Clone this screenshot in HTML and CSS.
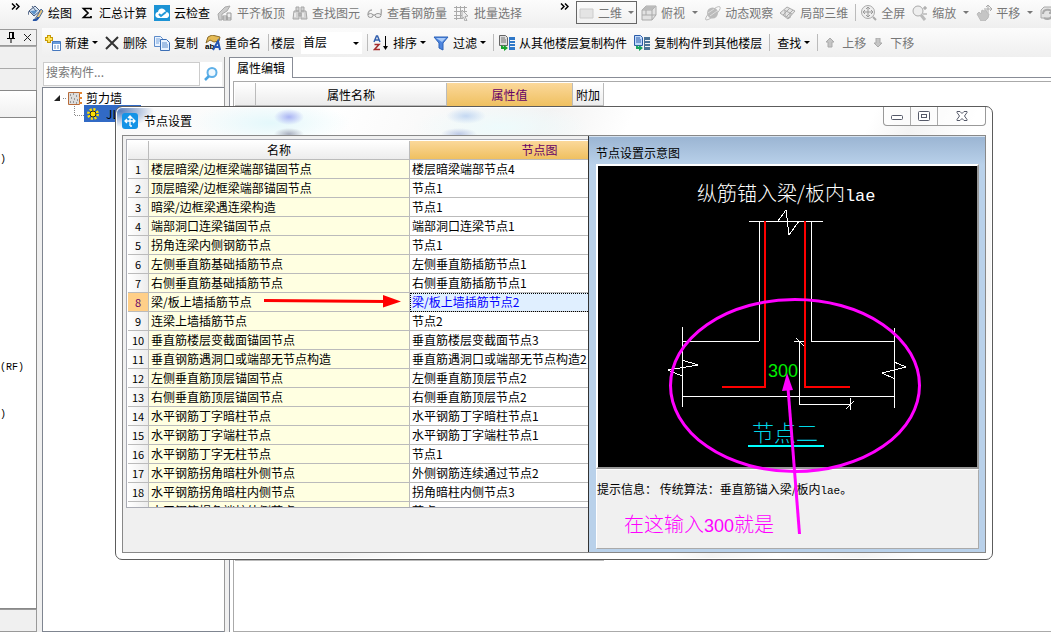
FILE: index.html
```html
<!DOCTYPE html>
<html lang="zh-CN">
<head>
<meta charset="utf-8">
<title>节点设置</title>
<link rel="stylesheet" href="styles.css">
</head>
<body>
<div class="app">
  <nav class="toolbar view-bar" aria-label="视图工具">
    <button class="more" aria-label="更多"><svg width="9" height="7"><path d="M1 .5l3 3-3 3M5 .5l3 3-3 3" fill="none" stroke="#000" stroke-width="1.5"/></svg></button>
    <button class="tool"><svg class="icon" viewBox="0 0 16 16"><path d="M1 6L7 1l5 5-6 5z" fill="#dbe8f5" stroke="#45597b"/><path d="M2 6l8-1-4 5z" fill="#5c91c8"/><path d="M4 1l4 5M1 6L0 10" stroke="#4c6184" fill="none"/><path d="M13 4l-4 7-3 4 5-2 4-7z" fill="#e7c47a" stroke="#4a6b9c"/><path d="M5 15c3 1 5-1 5-3" stroke="#2453a5" stroke-width="2" fill="none"/></svg>绘图</button>
    <button class="tool"><svg class="icon" viewBox="0 0 16 16"><path d="M12 5V3.500H4.500L9 8l-4.500 4.500H12V11" fill="none" stroke="#000" stroke-width="1.700"/></svg>汇总计算</button>
    <button class="tool"><svg class="icon" viewBox="0 0 16 16"><path d="M0 0h16v16H0z" fill="#1c93d5"/><path d="M4 13c-4-1-3-6 0-6 1-5 7-4 8 0 4 0 4 5 1 6z" fill="#fff"/><path d="M5 9l2 2 5-4" fill="none" stroke="#2399d9" stroke-width="2"/></svg>云检查</button>
    <button class="tool off"><svg class="icon" viewBox="0 0 16 16"><path d="M1 9l7-7 5-1-3 5-5 3v6H2z" fill="#ccc" stroke="#aaa"/><path d="M6 11h4v4H6zM10 8h4v7h-4zM6 13h8" fill="#eee" stroke="#999"/></svg>平齐板顶</button>
    <button class="tool off"><svg class="icon" viewBox="0 0 16 16"><path d="M4 2h3v4H4zM9 2h3v4H9zM2 6h5v8H1zM9 6h5l1 8H9zM7 8h2v3H7z" fill="#d2d2d2" stroke="#a6a6a6"/><path d="M3 8v4M11 8v4" stroke="#fff"/></svg>查找图元</button>
    <button class="tool off"><svg class="icon" viewBox="0 0 16 16"><path d="M5 5C2 5 1 8 1 10M14 4c1 2 0 4 0 6M6 10h2" fill="none" stroke="#aaa" stroke-width="1.500"/><ellipse cx="3.500" cy="10.500" rx="2.500" ry="2" fill="#eee" stroke="#999"/><ellipse cx="11" cy="10.500" rx="3" ry="2" fill="#eee" stroke="#999"/></svg>查看钢筋量</button>
    <button class="tool off"><svg class="icon" viewBox="0 0 16 16"><path d="M0 2.500h13M0 6.500h13M0 10.500h8M2.500 1v14M6.500 1v13M10.500 1v5M0 13.500h8" stroke="#aaa" fill="none"/><path d="M8 5l6 6-3 .5 2 4-2 .5-1.500-4L8 14z" fill="#eee" stroke="#aaa"/></svg>批量选择</button>
    <button class="more second" aria-label="更多"><svg width="9" height="7"><path d="M1 .5l3 3-3 3M5 .5l3 3-3 3" fill="none" stroke="#000" stroke-width="1.500"/></svg></button>
    <button class="tool off framed"><svg class="icon" viewBox="0 0 16 16"><path d="M1 4h13v9H1z" fill="#e4e4e4" stroke="#ccc"/></svg>二维<i class="caret"></i></button>
    <button class="tool off"><svg class="icon" viewBox="0 0 16 16"><path d="M1 5l4-4h10v9l-4 5H1z" fill="#e2e2e2" stroke="#aaa"/><path d="M1 5h10v10M11 5l4-4M5 1v9H1M5 10h10" fill="none" stroke="#aaa"/><path d="M1 5l4-4h10l-4 4z" fill="#bbb"/></svg>俯视<i class="caret"></i></button>
    <button class="tool off"><svg class="icon" viewBox="0 0 16 16"><circle cx="7.500" cy="8" r="5.500" fill="#bbb"/><path d="M1 15c-3-3 12-16 14-13s-9 13-14 13" fill="none" stroke="#bbb"/><path d="M3 8l6-4M5 11l7-5" stroke="#ddd"/></svg>动态观察</button>
    <button class="tool off"><svg class="icon" viewBox="0 0 16 16"><path d="M0 8l7-6 8 4-7 8z" fill="#e4e4e4" stroke="#aaa"/><path d="M4 5l8 4M3 10l7-7M6 12l7-7M5 6v5l5 2V8" stroke="#aaa" fill="none"/></svg>局部三维</button>
    <span class="sep tight"></span>
    <button class="tool off"><svg class="icon" viewBox="0 0 16 16"><circle cx="7" cy="7" r="6.500" fill="#eee" stroke="#aaa"/><path d="M7 2v10M2 7h10M5 4l2-2 2 2M5 10l2 2 2-2M4 5L2 7l2 2M10 5l2 2-2 2" fill="none" stroke="#999"/><path d="M12 12l3 3" stroke="#aaa" stroke-width="2"/></svg>全屏</button>
    <button class="tool off"><svg class="icon" viewBox="0 0 16 16"><circle cx="6" cy="6" r="5" fill="#eee" stroke="#aaa"/><path d="M9 10l4 5" stroke="#bbb" stroke-width="3"/><path d="M11 3h4M13 1v4M11 9h4" stroke="#999"/></svg>缩放<i class="caret"></i></button>
    <button class="tool off"><svg class="icon" viewBox="0 0 16 16"><path d="M1 9l2-2 2 2 1-4 2 1 2-1 1 3 2 1-1 4-3 3H5z" fill="#c5c5c5" stroke="#bbb"/><path d="M12 0v8M8 4h8M10 2l2-2 2 2M14 2l2 2-2 2" fill="none" stroke="#aaa"/></svg>平移<i class="caret"></i></button>
    <button class="tool off" aria-label="旋转"><svg class="icon" viewBox="0 0 16 16"><path d="M1 5l3-3h9l2 3v8H1z" fill="#e2e2e2" stroke="#aaa"/><path d="M3 9c0-5 8-6 9-1M13 4v4H9M4 13c3 2 7 1 8-2" fill="none" stroke="#aaa" stroke-width="2"/></svg></button>
  </nav>

  <div class="main">
    <aside class="dock">
      <header class="dock-head">
        <button aria-label="固定"><svg width="8" height="11"><path d="M2.500 0v6M5.500 0v6M6.500 0v6M2 .5h5M0 6.500h8M4 7v4" stroke="#000" fill="none"/></svg></button>
        <button aria-label="关闭"><svg width="9" height="9"><path d="M1 1l7 7M8 1L1 8" stroke="#222" fill="none"/></svg></button>
      </header>
      <div class="dock-strip"></div>
      <div class="dock-strip"></div>
      <div class="dock-strip tall"></div>
      <div class="dock-list"><span>)</span><span class="rf">(RF)</span><span class="last">)</span></div>
      <div class="dock-foot"></div>
    </aside>

    <section class="work">
      <nav class="toolbar edit-bar" aria-label="构件工具">
        <button class="tool"><svg class="icon" viewBox="0 0 16 16"><path d="M4 0v8M0 4h8" stroke="#c79a05" stroke-width="4"/><path d="M4 1v6M1 4h6" stroke="#ffe45a" stroke-width="2"/><path d="M7.500 6.500h8v9h-8z" fill="#fff" stroke="#4678bf"/><path d="M8 8h7" stroke="#6a9cdc" stroke-width="2"/><path d="M9 11h2M12 11h2M9 13h2M12 13h2" stroke="#6a8fc2"/></svg>新建<i class="caret near"></i></button>
        <button class="tool"><svg class="icon cross" viewBox="0 0 14 14"><path d="M1 1l12 12M13 1L1 13" fill="none" stroke="#333" stroke-width="2"/></svg>删除</button>
        <button class="tool"><svg class="icon" viewBox="0 0 16 16"><path d="M.5 1.500h6l2 2v8h-8z" fill="#eaf3ff" stroke="#5d8bc9"/><path d="M2 4h4M2 6h4M2 8h3" stroke="#78a5dc"/><path d="M6.500 4.500h6l3 3v8h-9z" fill="#eaf3ff" stroke="#3c6fb5"/><path d="M8 8h5M8 10h6M8 12h6" stroke="#5c8dcc"/></svg>复制</button>
        <button class="tool"><svg class="icon" viewBox="0 0 16 16"><path d="M3 2l4-2 8 2-1 4-5 1-4-2-4 3z" fill="#e5bb55" stroke="#8b6b28"/><text x="0" y="14" class="ab">ab</text><path d="M8 15l5-9 2 9M10 12h5" fill="none" stroke="#2456b5" stroke-width="2"/></svg>重命名</button>
        <span class="sep lead"></span>
        <label class="floor" for="floor">楼层</label>
        <span class="combo"><select id="floor"><option>首层</option></select><i class="caret"></i></span>
        <span class="sep tight"></span>
        <button class="tool"><svg class="icon" viewBox="0 0 16 16"><path d="M1 7l2.500-6h1L7 7M2 5h4" fill="none" stroke="#3360ad" stroke-width="1.500"/><path d="M1.500 9.500H6l-4.500 5H7" fill="none" stroke="#a32c2c" stroke-width="1.500"/><path d="M12.500 1v13" stroke="#000"/><path d="M10 11h5l-2.500 4z"/></svg>排序<i class="caret near"></i></button>
        <button class="tool"><svg class="icon" viewBox="0 0 16 16"><path d="M1 2h14l-5 6v7l-4-2V8z" fill="#4f86df" stroke="#2c62b8"/><path d="M3 3h10l-4 4z" fill="#a9cbfa"/></svg>过滤<i class="caret near"></i></button>
        <span class="sep tight"></span>
        <button class="tool"><svg class="icon" viewBox="0 0 16 16"><path d="M.5.5h6l2 2v8h-8z" fill="#ddd" stroke="#666"/><path d="M2 3h4M2 5h5M2 7h5" stroke="#777"/><path d="M10 2h6v3h-5v1h5v2h-5v1h5v2h-5v1h5v3h-6z" fill="#2f78c8"/><path d="M2 10l3 2v-2l4 3-4 3v-2H2z" fill="#17a32d"/></svg>从其他楼层复制构件</button>
        <button class="tool"><svg class="icon" viewBox="0 0 16 16"><path d="M.5.5h6l2 2v8h-8z" fill="#bfd8fa" stroke="#2b5ca8"/><path d="M2 3h4M2 5h5M2 7h5" stroke="#2b5ca8"/><path d="M10 2h6v3h-5v1h5v2h-5v1h5v2h-5v1h5v3h-6z" fill="#4b7396"/><path d="M2 10l3 2v-2l4 3-4 3v-2H2z" fill="#17a35d"/></svg>复制构件到其他楼层</button>
        <span class="sep"></span>
        <button class="tool">查找<i class="caret near"></i></button>
        <span class="sep"></span>
        <button class="tool off"><svg class="icon small" viewBox="0 0 10 10"><path d="M5 0l4 4H7v5H3V4H1z" fill="#c5c5c5" stroke="#aaa"/></svg>上移</button>
        <button class="tool off"><svg class="icon small" viewBox="0 0 10 10"><path d="M5 9l4-4H7V0H3v5H1z" fill="#c5c5c5" stroke="#aaa"/></svg>下移</button>
      </nav>

      <div class="panes">
        <section class="tree-pane">
          <form class="search"><input type="text" placeholder="搜索构件..." aria-label="搜索构件"><button type="button" aria-label="搜索"><svg width="14" height="14"><circle cx="8" cy="5.500" r="4.500" fill="#eef8ff" stroke="#5fb0e8" stroke-width="2"/><path d="M5 9l-4 4" stroke="#4aa5e2" stroke-width="2.500"/></svg></button></form>
          <div class="tree">
            <div class="node"><svg width="30" height="16"><path d="M1 11h6V5z" fill="#222"/><path d="M10 8.500h4" stroke="#888" stroke-dasharray="1 1"/><path d="M15.500 2.500h11v12h-11z" fill="#ddd" stroke="#b86b39"/><path d="M17 5h1M20 4h1M23 6h1M18 8h1M21 9h1M24 10h1M17 12h1M20 12h1M23 13h1" stroke="#555"/><path d="M26 3h3M26 8h3M26 13h3" stroke="#e48633" stroke-width="2"/></svg>剪力墙</div>
            <div class="node child"><svg class="elbow" width="10" height="16"><path d="M.5 0v9.500H10" fill="none" stroke="#888" stroke-dasharray="1 1"/></svg><span class="picked"><svg width="12" height="12"><circle cx="6" cy="6" r="4.500" fill="none" stroke="#ffe000" stroke-width="3" stroke-dasharray="2 1.500"/><circle cx="6" cy="6" r="3" fill="#ffe000" stroke="#222"/></svg>JLQ-1</span></div>
          </div>
        </section>
        <section class="editor">
          <div class="tabs"><button class="tab">属性编辑</button></div>
          <div class="grid">
            <table class="props"><thead><tr><th class="c0"></th><th class="c1">属性名称</th><th class="c2">属性值</th><th class="c3">附加</th></tr></thead></table>
          </div>
        </section>
      </div>
    </section>
  </div>

  <div class="dialog" role="dialog" aria-labelledby="dlg-title">
    <header class="dlg-head">
      <svg class="logo" viewBox="0 0 16 16"><rect width="16" height="16" rx="3" fill="#1593e6"/><path d="M8 3v10M3 8h10M6 5l2-2 2 2H8M5 6L3 8l2 2M11 6l2 2-2 2M8 13h2" fill="none" stroke="#fff" stroke-width="1.300"/></svg>
      <h1 id="dlg-title">节点设置</h1>
      <div class="win">
        <button aria-label="最小化"><svg width="12" height="6"><rect x=".5" y=".5" width="11" height="4" rx="1" fill="#fff" stroke="#555968"/></svg></button>
        <button aria-label="最大化"><svg width="12" height="10"><rect x=".5" y=".5" width="11" height="9" rx="1" fill="#fff" stroke="#555968"/><rect x="3.500" y="3.500" width="5" height="3" fill="#fff" stroke="#555968"/></svg></button>
        <button class="shut" aria-label="关闭"><svg width="12" height="10"><path d="M1 .5h3l2 2 2-2h3v1L8.500 5 11 8.500v1H8l-2-2-2 2H1v-1L3.500 5 1 1.500z" fill="#fff" stroke="#555968"/></svg></button>
      </div>
    </header>
    <div class="client">
      <div class="list-side">
        <div class="sheet">
          <table class="nodes">
            <colgroup><col class="n0"><col class="n1"><col class="n2"></colgroup>
            <thead><tr><th></th><th>名称</th><th class="hot">节点图</th></tr></thead>
            <tbody>
              <tr><th>1</th><td>楼层暗梁/边框梁端部锚固节点</td><td>楼层暗梁端部节点4</td></tr>
              <tr><th>2</th><td>顶层暗梁/边框梁端部锚固节点</td><td>节点1</td></tr>
              <tr><th>3</th><td>暗梁/边框梁遇连梁构造</td><td>节点1</td></tr>
              <tr><th>4</th><td>端部洞口连梁锚固节点</td><td>端部洞口连梁节点1</td></tr>
              <tr><th>5</th><td>拐角连梁内侧钢筋节点</td><td>节点1</td></tr>
              <tr><th>6</th><td>左侧垂直筋基础插筋节点</td><td>左侧垂直筋插筋节点1</td></tr>
              <tr><th>7</th><td>右侧垂直筋基础插筋节点</td><td>右侧垂直筋插筋节点1</td></tr>
              <tr class="current"><th>8</th><td>梁/板上墙插筋节点</td><td>梁/板上墙插筋节点2</td></tr>
              <tr><th>9</th><td>连梁上墙插筋节点</td><td>节点2</td></tr>
              <tr><th>10</th><td>垂直筋楼层变截面锚固节点</td><td>垂直筋楼层变截面节点3</td></tr>
              <tr><th>11</th><td>垂直钢筋遇洞口或端部无节点构造</td><td>垂直筋遇洞口或端部无节点构造2</td></tr>
              <tr><th>12</th><td>左侧垂直筋顶层锚固节点</td><td>左侧垂直筋顶层节点2</td></tr>
              <tr><th>13</th><td>右侧垂直筋顶层锚固节点</td><td>右侧垂直筋顶层节点2</td></tr>
              <tr><th>14</th><td>水平钢筋丁字暗柱节点</td><td>水平钢筋丁字暗柱节点1</td></tr>
              <tr><th>15</th><td>水平钢筋丁字端柱节点</td><td>水平钢筋丁字端柱节点1</td></tr>
              <tr><th>16</th><td>水平钢筋丁字无柱节点</td><td>节点1</td></tr>
              <tr><th>17</th><td>水平钢筋拐角暗柱外侧节点</td><td>外侧钢筋连续通过节点2</td></tr>
              <tr><th>18</th><td>水平钢筋拐角暗柱内侧节点</td><td>拐角暗柱内侧节点3</td></tr>
              <tr><th></th><td>水平钢筋拐角端柱外侧节点</td><td>节点3</td></tr>
            </tbody>
          </table>
        </div>
      </div>
      <div class="preview-side">
        <h2>节点设置示意图</h2>
        <div class="canvas">
          <svg class="drawing" viewBox="598 166 379 301">
            <text x="697" y="201" class="cad white">纵筋锚入梁/板内<tspan class="mono">lae</tspan></text>
            <g fill="none" stroke="#fff" shape-rendering="crispEdges">
              <path d="M749 221.500h74M759.500 221v120M811.500 221v120M682 341.500h77M811 341.500h84M682.500 327v80M894.500 328v80M682 396.500h213M799.500 341v63M799 404.500h52M850.500 398v12M794 341.500h12"/>
              <path d="M778 221l8-11 3 25 10-14M682 360l16 5-30 5 14 6M894 362l12 5-24 6 13 6M846 409l8-8M796 338l8 8"/>
            </g>
            <path d="M765 221v166h-43M805 221v166h45" fill="none" stroke="#f00" stroke-width="2" shape-rendering="crispEdges"/>
            <text x="768" y="377" class="cad digits green">300</text>
            <text x="752" y="441" class="cad cyan">节点二</text>
            <path d="M748 446h76" stroke="#0ff" stroke-width="2"/>
          </svg>
        </div>
        <div class="hint">
          <p>提示信息： 传统算法：垂直筋锚入梁/板内<span class="mono-sm">lae</span>。</p>
          <p class="note">在这输入<span class="digits">300</span>就是</p>
        </div>
      </div>
    </div>
    <svg class="marks" viewBox="115 106 877 453" aria-hidden="true">
      <path d="M264 300.500l121 1" stroke="#f00" stroke-width="3"/><path d="M383 295l18 6.500-18 6z" fill="#f00"/>
      <ellipse cx="795" cy="385.500" rx="124.500" ry="86" fill="none" stroke="#f0f" stroke-width="3"/>
      <path d="M799.500 534L788 388" stroke="#f0f" stroke-width="3"/><path d="M787 373l-5 18 11-1z" fill="#f0f"/>
    </svg>
  </div>
</div>
</body>
</html>
```
FILE: styles.css
```css
* { box-sizing: border-box; }
body { margin: 0; font: 12px/18px "Noto Sans CJK SC", "Liberation Sans", sans-serif; color: #000; background: #f0f0f0; }
button, input, select { font: inherit; color: inherit; margin: 0; padding: 0; border: 0; background: none; border-radius: 0; }
h1, h2, p { margin: 0; font-size: 12px; font-weight: 400; }
svg { display: block; flex: none; }

.app { position: relative; display: flex; flex-direction: column; height: 100vh; overflow: hidden; }
.toolbar { display: flex; align-items: center; gap: 7px; flex: none; overflow: hidden; white-space: nowrap; background: linear-gradient(#fcfcfc, #efefef); }
.view-bar { height: 28px; padding: 0 0 3px 11px; }
.tool { display: flex; align-items: center; gap: 4px; flex: none; }
.off { color: #777; }
.icon { width: 16px; height: 16px; }
.icon.cross { width: 14px; height: 14px; }
.icon.small { width: 10px; height: 10px; margin-right: 3px; }
.ab { font: bold 8px "Liberation Sans", sans-serif; }
.caret { border: 3px solid transparent; border-top-color: currentColor; border-bottom: 0; margin-left: 3px; flex: none; }
.caret.near { margin-left: -1px; }
.more { margin-right: 1px; align-self: flex-start; padding-top: 3px; }
.more.second { margin-left: 31px; }
.framed { width: 61px; height: 23px; border: 1px solid #666; padding-left: 2px; gap: 3px; margin: 0 -3px 0 -1px; }
.sep { width: 1px; height: 17px; background: #bbb; flex: none; }
.sep.tight { margin-right: -2px; }
.sep.lead { margin-right: -5px; }

.main { display: flex; flex: 1; min-height: 0; }
.dock { width: 42px; padding-right: 5px; display: flex; flex-direction: column; flex: none; }
.dock-head { height: 17px; margin-top: 1px; display: flex; align-items: center; justify-content: space-between; padding: 0 4px 0 7px; border: 1px solid #999; border-left: 0; }
.dock-strip { height: 22px; border: 1px solid #aaa; border-left: 0; border-bottom: 0; }
.dock-strip.tall { height: 27px; border-color: #888; background: linear-gradient(#fff, #f0f0f0); }
.dock-list { flex: 1; background: #fff; border: 1px solid #888; border-left: 0; font: 10px/18px "Liberation Mono", monospace; display: flex; flex-direction: column; padding-top: 33px; }
.dock-list .rf { margin-top: 190px; }
.dock-list .last { margin-top: 29px; }
.dock-foot { height: 23px; border: 1px solid #999; border-left: 0; }

.work { flex: 1; min-width: 0; display: flex; flex-direction: column; }
.edit-bar { height: 29px; padding-left: 3px; }
.floor { margin-right: -1px; }
.combo { position: relative; width: 61px; height: 22px; background: #fff; flex: none; margin-right: -2px; }
.combo select { appearance: none; width: 100%; height: 21px; padding-left: 2px; background: #fff; }
.combo .caret { position: absolute; right: 3px; top: 10px; }
.panes { flex: 1; min-height: 0; display: flex; }
.tree-pane { width: 183px; flex: none; display: flex; flex-direction: column; border-right: 1px solid #999; }
.search { display: flex; height: 30px; padding: 5px 2px 1px 1px; }
.search input { width: 157px; border: 1px solid #ccc; background: #fff; padding: 0 2px 4px; }
.search input::placeholder { color: #777; opacity: 1; }
.search button { flex: 1; background: #fff; display: grid; place-items: center; }
.tree { flex: 1; background: #fff; border: 1px solid #7f8590; border-right: 0; padding-top: 2px; }
.node { display: flex; align-items: center; gap: 3px; height: 15px; padding-left: 10px; }
.node.child { padding-left: 31px; gap: 0; height: 17px; }
.picked { display: flex; align-items: center; gap: 7px; width: 57px; height: 17px; padding-left: 3px; background: #316ac5; overflow: hidden; }
.editor { flex: 1; min-width: 0; display: flex; flex-direction: column; margin-left: 4px; background: #fff; border-left: 1px solid #888c96; }
.tabs { height: 21px; border-bottom: 1px solid #888c96; display: flex; background: #fff; }
.tab { height: 21px; width: 63px; border: 1px solid #888c96; border-left: 0; border-bottom: 0; background: #fff; }
.grid { flex: 1; margin: 3px 0 0 3px; border: 1px solid #aaa; border-right: 0; padding: 1px 0 0 1px; }
.props { border-spacing: 0; table-layout: fixed; width: 369px; height: 478px; border-bottom: 1px solid #bbb; }
.props thead { display: table-row-group; }
.props tr { vertical-align: top; }
.props th { padding: 0; font-weight: 400; line-height: 23px; border-right: 1px solid #bbb; background: linear-gradient(#fff, #ececec 22px, #bbb 22px, #bbb 23px, #fff 23px); }
.c0 { width: 21px; } .c1 { width: 191px; } .c2 { width: 126px; } .c3 { width: 31px; }
.props .c2 { color: #606; background: linear-gradient(#fbd89a, #efc060 23px, #fff 23px); }

.dialog { position: absolute; left: 115px; top: 106px; width: 878px; height: 454px; display: flex; flex-direction: column; padding: 0 6px 6px; border: 1px solid #5c5c5c; border-radius: 7px; box-shadow: inset 0 0 0 1px #fff;
  background:
    radial-gradient(ellipse 34px 16px at 4px 4px, #5b80bd, transparent),
    radial-gradient(ellipse 15px 8px at 173px 10px, #aab4f4, transparent),
    radial-gradient(ellipse 15px 6px at 173px 27px, #aab0c0, transparent),
    radial-gradient(ellipse 20px 8px at 350px 9px, #c4d8f2, transparent),
    radial-gradient(ellipse 18px 6px at 343px 27px, #bdc9e6, transparent),
    radial-gradient(ellipse 80px 22px at 155px 16px, #e4f8fb, transparent),
    radial-gradient(ellipse 90px 22px at 385px 20px, #eefbfc, transparent),
    linear-gradient(115deg, #f9f9f9 0, #fff 20%, #f3f3f3 40%, #fff 48%, #fff 70%, #f3f3f3 74%, #fff 80%, #f4f4f4 88%, #fff 93%); }
.dlg-head { height: 28px; flex: none; display: flex; align-items: center; gap: 6px; }
.logo { width: 16px; height: 16px; }
.win { margin-left: auto; align-self: flex-start; display: flex; width: 103px; height: 19px; border: 1px solid #999; border-top: 0; border-radius: 0 0 4px 4px; background: #fff9; }
.win button { width: 27px; display: grid; place-items: center; border-right: 1px solid #aaa; }
.win button:first-child { padding-top: 4px; }
.win .shut { flex: 1; border: 0; }
.client { flex: 1; min-height: 0; display: flex; border: 1px solid #888; background: #f0f0f0; }
.list-side { width: 466px; flex: none; padding: 3px 0 0 3px; border-right: 1px solid #333; }
.sheet { height: 369px; overflow: hidden; border: 1px solid #aaacb5; border-right: 0; padding: 1px 0 0 1px; background: #fff; }
.nodes { table-layout: fixed; width: 542px; border-spacing: 0; white-space: nowrap; }
.n0 { width: 21px; } .n1 { width: 261px; } .n2 { width: 260px; }
.nodes th, .nodes td { height: 19px; line-height: 18px; padding: 0 0 0 2px; border-right: 1px solid #bbb; border-bottom: 1px solid #bbb; font-weight: 400; text-align: left; }
.nodes th { padding: 0; text-align: center; background: linear-gradient(90deg, #fff, #ededed); }
.nodes thead th { background: linear-gradient(#fff, #ececec); }
.nodes tbody th { font-size: 11px; }
.nodes td:nth-child(2) { background: #ffffe1; }
.nodes td:nth-child(3) { background: #fff; }
.nodes thead .hot { color: #606; background: linear-gradient(#fbd89a, #efc060); }
.nodes .current th { background: #ffcf88; color: #606; }
.nodes .current td:nth-child(3) { background: #e0efff; color: #00f; outline: 1px dotted #000; outline-offset: -1px; }
.preview-side { flex: 1; min-width: 0; display: flex; flex-direction: column; padding: 0 6px 3px 7px; background: linear-gradient(#9bb5d3, #b9d1ea 28px); border-top: 1px solid #d5e2f0; }
.preview-side h2 { height: 27px; line-height: 32px; }
.canvas { border: 2px solid; border-color: #fff #999 #999 #fff; background: #000; flex: none; }
.drawing { width: 100%; height: auto; }
.cad { font: 20px "Noto Sans CJK SC", sans-serif; font-weight: 300; }
.white { fill: #fff; } .green { fill: #0e0; } .cyan { fill: #00d8e8; font-size: 22px; }
.mono { font-family: "Liberation Mono", monospace; font-size: 17px; }
.digits { font-family: "Liberation Sans", sans-serif; font-size: 18px; }
.mono-sm { font-family: "Liberation Mono", monospace; font-size: 11px; }
.hint { flex: 1; padding: 10px 0 0; background: #f0f0f0; border: 1px solid #aaa; border-left-color: #fff; border-top-color: #fff; }
.note { color: #f0f; font-size: 20px; line-height: 28px; font-weight: 300; padding: 10px 0 0 27px; }
.marks { position: absolute; inset: -1px auto auto -1px; width: 877px; height: 453px; pointer-events: none; }
```
